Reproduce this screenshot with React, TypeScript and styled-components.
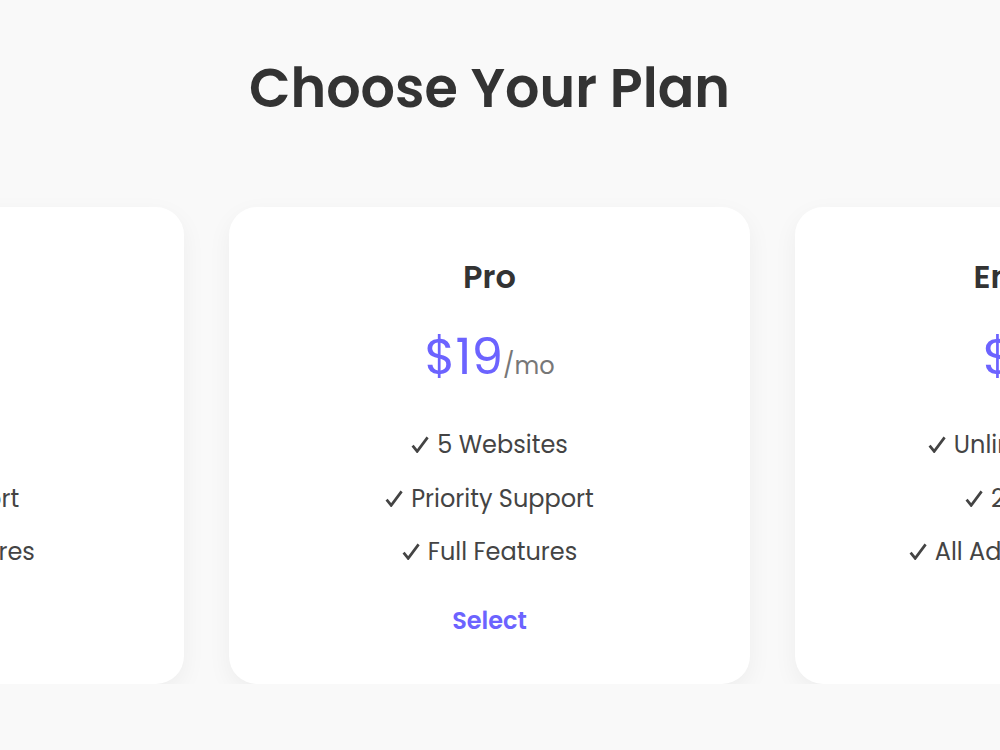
import styled, { createGlobalStyle } from "styled-components";

const GlobalStyle = createGlobalStyle`
  * {
    box-sizing: border-box;
  }
  body {
    margin: 0;
    background: #f9f9f9;
    font-family: "Poppins", "Open Sans", sans-serif;
    color: #333;
  }
`;

const Page = styled.div`
  width: 1000px;
  padding: 50px 21px 0 0;
  overflow: hidden;
`;

const Title = styled.h1`
  margin: 0;
  text-align: center;
  font-size: 54px;
  line-height: 76px;
  font-weight: 600;
  color: #333;
`;

const Row = styled.div`
  display: flex;
  justify-content: center;
  gap: 45px;
  margin-top: 81px;
`;

const Card = styled.div`
  flex: 0 0 521px;
  background: #fff;
  border-radius: 28px;
  box-shadow: 0 8px 24px rgba(0, 0, 0, 0.05);
  padding: 50px 40px 35px;
  text-align: center;
`;

const PlanName = styled.h3`
  margin: 0;
  font-size: 32px;
  line-height: 40px;
  font-weight: 600;
  color: #333;
`;

const Price = styled.div`
  margin-top: 28px;
  font-size: 50px;
  line-height: 64px;
  color: #6c63ff;

  span {
    font-size: 24px;
    color: #777;
  }
`;

const Features = styled.ul`
  list-style: none;
  margin: 20px 0 0;
  padding: 0;
`;

const Feature = styled.li`
  font-size: 24px;
  line-height: 33.5px;
  padding: 10px 0;
  color: #444;
`;

const CheckIcon = styled.svg`
  width: 18px;
  height: 17px;
  margin-right: 8px;
  vertical-align: baseline;
`;

const SelectButton = styled.button`
  margin-top: 13px;
  border: none;
  background: transparent;
  font-family: inherit;
  font-size: 24px;
  line-height: 33.6px;
  padding: 12px 24px;
  font-weight: 600;
  color: #6c63ff;
  cursor: pointer;
`;

function Check() {
  return (
    <CheckIcon viewBox="0 0 18 17">
      <path d="M1.6 9.6 L6.2 15.4 L16.6 1.4" fill="none" stroke="#444" strokeWidth="2.7" strokeLinejoin="miter" />
    </CheckIcon>
  );
}

const plans = [
  { name: "Basic", price: 9, features: ["1 Website", "Basic Support", "Limited Features"] },
  { name: "Pro", price: 19, features: ["5 Websites", "Priority Support", "Full Features"] },
  { name: "Enterprise", price: 49, features: ["Unlimited Websites", "24/7 Support", "All Advanced Features"] },
];

export default function App() {
  return (
    <>
      <GlobalStyle />
      <Page>
        <Title>Choose Your Plan</Title>
        <Row>
          {plans.map((p) => (
            <Card key={p.name}>
              <PlanName>{p.name}</PlanName>
              <Price>
                ${p.price}
                <span>/mo</span>
              </Price>
              <Features>
                {p.features.map((f) => (
                  <Feature key={f}>
                    <Check />
                    {f}
                  </Feature>
                ))}
              </Features>
              <SelectButton>Select</SelectButton>
            </Card>
          ))}
        </Row>
      </Page>
    </>
  );
}
